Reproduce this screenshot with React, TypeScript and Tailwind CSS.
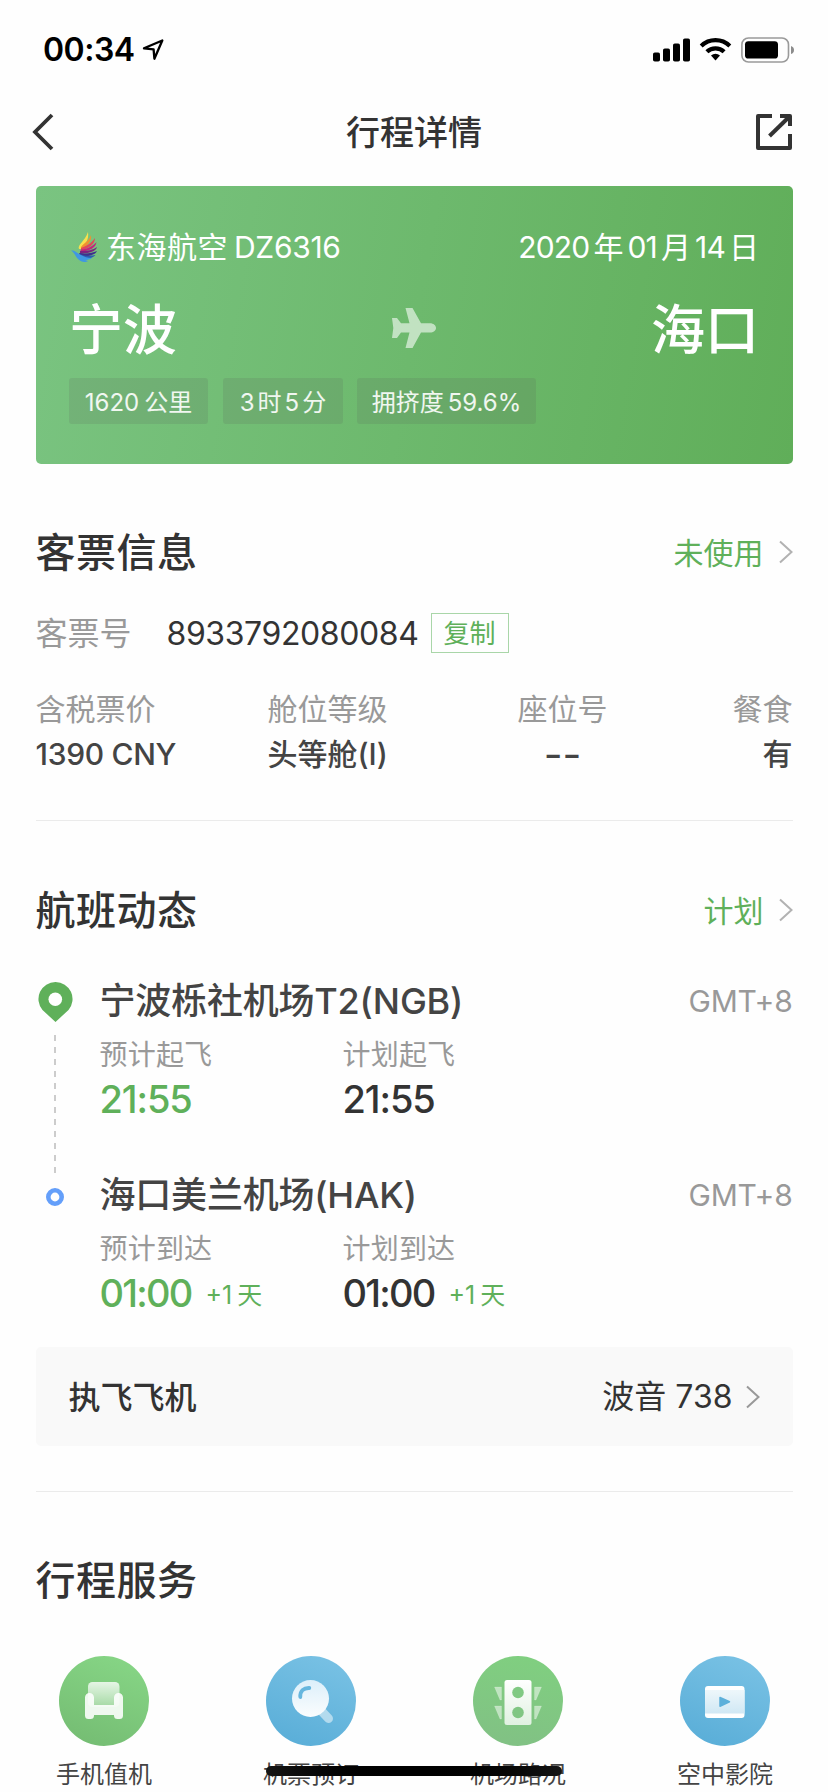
import React from 'react';

const Chevron: React.FC<{ color?: string }> = ({ color = '#b2b2b2' }) => (
  <svg width="14" height="24" viewBox="0 0 14 24" fill="none" className="shrink-0">
    <path d="M1 1.5 L12.5 12 L1 22.5" stroke={color} strokeWidth="2" />
  </svg>
);

const StatusBar: React.FC = () => (
  <div className="h-[99px] flex items-center justify-between pl-[43px] pr-[33px] text-black">
    <div className="flex items-center">
      <span className="w-[99px] text-[32px] leading-10 font-semibold tracking-[-0.5px]">00:34</span>
      <svg width="23" height="22" viewBox="0 0 23 22" fill="none">
        <path d="M2 9.3 L20.3 1.5 L12.4 19.7 L11.6 10.3 Z" stroke="#000" strokeWidth="2.3" strokeLinejoin="round" />
      </svg>
    </div>
    <div className="flex items-center">
      <svg width="38" height="24" viewBox="0 0 38 24">
        <rect x="0" y="14.5" width="7" height="9" rx="1.8" />
        <rect x="10" y="10.5" width="7" height="13" rx="1.8" />
        <rect x="20" y="5.5" width="7" height="18" rx="1.8" />
        <rect x="30" y="0.5" width="7" height="23" rx="1.8" />
      </svg>
      <svg width="33" height="25" viewBox="0 0 33 25" className="ml-[8px]" fill="none" stroke="#000" strokeWidth="4.2">
        <path d="M2.2 8.9 A20.5 20.5 0 0 1 30.8 8.9" />
        <path d="M7.9 14.8 A12.3 12.3 0 0 1 25.1 14.8" />
        <path d="M12 18.4 A7 7 0 0 1 21 18.4 L16.5 23.6 Z" fill="#000" stroke="none" />
      </svg>
      <svg width="54" height="26" viewBox="0 0 54 26" className="ml-[9px]">
        <rect x="0.9" y="1" width="46.6" height="24" rx="6.5" fill="none" stroke="#9a9a9a" strokeWidth="1.6" />
        <rect x="4" y="4.2" width="33" height="17.4" rx="3.4" />
        <path d="M50 9 Q53 10 53 13 Q53 16 50 17 Z" fill="#8c8c8c" />
      </svg>
    </div>
  </div>
);

const NavBar: React.FC = () => (
  <div className="h-[66px] flex items-center justify-between pl-[31px] pr-[36px]">
    <svg width="37" height="38" viewBox="0 0 37 38" fill="none">
      <path d="M21 2 L4 19 L21 36" stroke="#333" strokeWidth="3.8" />
    </svg>
    <h1 className="pt-[2px] pl-[4px] text-[34px] leading-[44px] font-medium text-[#333]">行程详情</h1>
    <svg width="36" height="36" viewBox="0 0 36 36" fill="none" stroke="#333" strokeWidth="4">
      <path d="M16 2 H2 V34 H34 V20" strokeLinejoin="round" />
      <path d="M24 2 H34 V12" strokeLinejoin="round" />
      <path d="M13.5 22 L33 3" />
    </svg>
  </div>
);

const DonghaiLogo: React.FC = () => (
  <svg width="27" height="31" viewBox="0 0 27 31">
    <path d="M17 0 C18 7 15 12 10 17 L8 17 C6 13 14 9 17 0 Z" fill="#f8e04c" />
    <path d="M20 3 C21 9 17 13 10 18 L10 15 C13 11 18 9 20 3 Z" fill="#f0912f" />
    <path d="M24 6 C24 12 18 16 10 19 L10 16 C15 14 20 12 24 6 Z" fill="#e0475a" />
    <path d="M25.5 10 C25 16 18 19 9 20 L10 17.5 C17 17 22 14 25.5 10 Z" fill="#c2247c" />
    <path d="M26 15 C25 20 17 21 9 22 L9 19 C17 19 22 18 26 15 Z" fill="#7c2380" />
    <path d="M26 19 C24 23.500 17 24 10 25 L8 21 C16 22 21 21 26 19 Z" fill="#40308c" />
    <path d="M24.500 23 C22 26 18 26.500 12 27 L8 22 C15 24.500 20 24 24.500 23 Z" fill="#2c5db0" />
    <path d="M0 18.500 C4 18 6 21 9 22.500 C13 25 17 26 21 26 C19 27.500 16 28 14 28 L17 29 C15 30.500 10 30.500 7 27 C4 24 4 21 0 18.500 Z" fill="#3f97e4" />
  </svg>
);

const FlightCard: React.FC = () => (
  <div className="h-[278px] mt-[21px] rounded-[5px] bg-linear-[100deg] from-[#7ac481] to-[#60ae59] px-[33.5px] pt-[39px] text-white">
    <div className="flex items-center justify-between h-[44px]">
      <div className="flex items-center text-[30px] leading-[44px]">
        <span className="ml-[2px]">
          <DonghaiLogo />
        </span>
        <span className="ml-[8px] tracking-[0.5px]">东海航空</span>
        <span className="ml-[6px] tracking-[-0.3px]">DZ6316</span>
      </div>
      <div className="flex items-center gap-[4px] text-[30px] leading-[44px]">
        <span className="tracking-[-0.8px]">2020</span>
        <span>年</span>
        <span className="tracking-[-0.8px]">01</span>
        <span>月</span>
        <span className="tracking-[-0.8px]">14</span>
        <span>日</span>
      </div>
    </div>
    <div className="flex items-center justify-between mt-[21px] h-[76px] text-[54px] leading-[76px] font-medium">
      <span className="pt-[5px]">宁波</span>
      <svg width="44" height="40" viewBox="0 0 44 40">
        <path
          d="M0 10 H5 L9 15.300 H17.500 L13.500 0 H20.500 L29 15.300 H38 C41.500 15.300 44 17.500 44 20 C44 22.500 41.500 24.500 38 24.500 H29 L20.500 40 H13.500 L17.500 24.500 H9 L5 30 H0 L1.300 20 Z"
          fill="#fff"
          fillOpacity="0.58"
        />
      </svg>
      <span className="pt-[5px]">海口</span>
    </div>
    <div className="flex mt-[12px] text-[24px] leading-[49px] text-white/90">
      <div className="w-[139px] h-[46px] rounded-[3px] bg-[#555]/15 flex justify-center gap-[5px]">
        <span>1620</span>
        <span>公里</span>
      </div>
      <div className="w-[120px] h-[46px] ml-[15px] rounded-[3px] bg-[#555]/15 flex justify-center gap-[3px]">
        <span>3</span>
        <span>时</span>
        <span>5</span>
        <span>分</span>
      </div>
      <div className="w-[179px] h-[46px] ml-[14px] rounded-[3px] bg-[#555]/15 flex justify-center gap-[4px]">
        <span>拥挤度</span>
        <span>59.6%</span>
      </div>
    </div>
  </div>
);

const SectionHeader: React.FC<{ title: string; status?: string }> = ({ title, status }) => (
  <div className="flex items-center justify-between h-[56px]">
    <h2 className="pt-[2px] text-[40px] leading-[56px] font-medium text-[#333] tracking-[0.5px]">{title}</h2>
    {status && (
      <div className="flex items-center gap-[15px] text-[30px] leading-[56px] text-[#5fb05a]">
        <span className="pt-px">{status}</span>
        <Chevron />
      </div>
    )}
  </div>
);

const TicketInfo: React.FC = () => (
  <section className="mt-[60px] border-b border-[#ebebeb] h-[297px]">
    <SectionHeader title="客票信息" status="未使用" />
    <div className="flex items-center mt-[33px] h-[40px]">
      <span className="w-[131px] pt-[2px] text-[32px] leading-10 text-[#999]">客票号</span>
      <span className="w-[264px] pt-[1px] text-[32px] leading-10 text-[#333] tracking-[-0.4px]">8933792080084</span>
      <button className="w-[78px] h-[40px] border border-[#a9d6a8] text-[26px] leading-[40px] text-[#5fb05a]">复制</button>
    </div>
    <div className="flex mt-[34px] text-[30px] leading-[45px]">
      <div className="w-[232px]">
        <div className="text-[#999]">含税票价</div>
        <div className="font-medium text-[#444] tracking-[-0.3px]">1390 CNY</div>
      </div>
      <div className="w-[250px]">
        <div className="text-[#999]">舱位等级</div>
        <div className="font-medium text-[#444]">头等舱(I)</div>
      </div>
      <div className="w-[90px] text-center">
        <div className="text-[#999]">座位号</div>
        <div className="text-[#444] text-[41px]">--</div>
      </div>
      <div className="flex-1 text-right">
        <div className="text-[#999]">餐食</div>
        <div className="font-medium text-[#444]">有</div>
      </div>
    </div>
  </section>
);

interface StopProps {
  marker: React.ReactNode;
  airport: string;
  labels: [string, string];
  time: React.ReactNode;
  nextDay?: boolean;
}

const NextDay = () => (
  <span className="flex gap-[5px] pt-[2px] ml-[15px] text-[25px] font-normal text-[#5fb05a]">
    <span>+1</span>
    <span>天</span>
  </span>
);

const Stop: React.FC<StopProps> = ({ marker, airport, labels, time, nextDay }) => (
  <div className="flex h-[194px]">
    <div className="w-[64px] flex flex-col shrink-0">{marker}</div>
    <div className="flex-1">
      <div className="flex justify-between leading-[58px]">
        <span className="text-[36px] font-medium text-[#444] tracking-[-0.2px]">{airport}</span>
        <span className="text-[30px] text-[#999] tracking-[-0.2px]">GMT+8</span>
      </div>
      <div className="flex text-[28px] leading-[51px] text-[#999] tracking-[0.2px]">
        <span className="w-[243px]">{labels[0]}</span>
        <span>{labels[1]}</span>
      </div>
      <div className="flex text-[38px] leading-[37px] font-medium">
        <div className="w-[243px] flex text-[#5fb05a]">
          <span className="w-[91px]">{time}</span>
          {nextDay && <NextDay />}
        </div>
        <div className="flex text-[#333]">
          <span className="w-[91px]">{time}</span>
          {nextDay && <NextDay />}
        </div>
      </div>
    </div>
  </div>
);

const DepartureMarker = () => (
  <>
    <svg width="35" height="40" viewBox="0 0 35 40" className="shrink-0 ml-[2px] mt-[10px]">
      <path d="M17.500 0 A17 17 0 0 1 30.500 28 L17.500 40 L4.500 28 A17 17 0 0 1 17.500 0 Z" fill="#5fb05a" />
      <circle cx="17.300" cy="17.300" r="6.800" fill="#fff" />
    </svg>
    <svg width="2" height="138" viewBox="0 0 2 138" className="shrink-0 ml-[18.5px] mt-[13px]">
      <path d="M1 0 V138" stroke="#ccc" strokeWidth="2" strokeDasharray="6 6" />
    </svg>
  </>
);

const ArrivalMarker = () => (
  <svg width="18" height="18" viewBox="0 0 18 18" className="shrink-0 ml-[10.5px] mt-[22px]">
    <circle cx="9" cy="9" r="6.700" fill="none" stroke="#649ffa" strokeWidth="4.600" />
  </svg>
);

const FlightStatus: React.FC = () => (
  <section className="pt-[61px] border-b border-[#ebebeb] h-[671px]">
    <SectionHeader title="航班动态" status="计划" />
    <div className="mt-[34px]">
      <Stop
        marker={<DepartureMarker />}
        airport="宁波栎社机场T2(NGB)"
        labels={['预计起飞', '计划起飞']}
        time={<span className="tracking-[-1.1px]">21:55</span>}
      />
      <Stop
        marker={<ArrivalMarker />}
        airport="海口美兰机场(HAK)"
        labels={['预计到达', '计划到达']}
        time={<span className="tracking-[-1.8px]">01:00</span>}
        nextDay
      />
    </div>
    <div className="-mt-[13px] h-[99px] rounded-[5px] bg-[#f9f9f9] flex items-center justify-between px-[33px] text-[32px] leading-[44px] text-[#333]">
      <span className="pt-[2px] font-medium">执飞飞机</span>
      <div className="flex items-center gap-[13px]">
        <span className="pt-[1px]">波音 738</span>
        <Chevron color="#999" />
      </div>
    </div>
  </section>
);

const SeatIcon = () => (
  <svg width="90" height="90" viewBox="0 0 90 90">
    <defs>
      <linearGradient id="seatBg" x1="0.7" y1="0" x2="0.3" y2="1">
        <stop stopColor="#86d585" />
        <stop offset="1" stopColor="#75bd73" />
      </linearGradient>
      <linearGradient id="seatBack" x1="0" y1="0" x2="0" y2="1">
        <stop stopColor="#fff" stopOpacity="0.8" />
        <stop offset="1" stopColor="#fff" stopOpacity="0.3" />
      </linearGradient>
    </defs>
    <circle cx="45" cy="45" r="45" fill="url(#seatBg)" />
    <rect x="29" y="26" width="31.500" height="25" rx="4.500" fill="url(#seatBack)" />
    <path
      d="M26 41.500 a4.500 4.500 0 0 1 9 0 V49 H55 V41.500 a4.500 4.500 0 0 1 9 0 V59.500 a3.500 3.500 0 0 1 -3.500 3.500 H58.500 a3.500 3.500 0 0 1 -3.500 -3.500 V59 H35 V59.500 a3.500 3.500 0 0 1 -3.500 3.500 H29.500 a3.500 3.500 0 0 1 -3.500 -3.500 Z"
      fill="#fff"
      fillOpacity="0.88"
    />
  </svg>
);

const SearchIcon = () => (
  <svg width="90" height="90" viewBox="0 0 90 90">
    <defs>
      <linearGradient id="searchBg" x1="0.7" y1="0" x2="0.3" y2="1">
        <stop stopColor="#78c1e4" />
        <stop offset="1" stopColor="#5aaed8" />
      </linearGradient>
      <linearGradient id="searchLens" x1="0" y1="0" x2="0" y2="1">
        <stop stopColor="#dceffa" />
        <stop offset="1" stopColor="#fbfdfe" />
      </linearGradient>
    </defs>
    <circle cx="45" cy="45" r="45" fill="url(#searchBg)" />
    <path d="M55 54.500 L62.500 62.500" stroke="#fff" strokeOpacity="0.5" strokeWidth="9" strokeLinecap="round" />
    <circle cx="44.500" cy="42.500" r="18.500" fill="url(#searchLens)" />
    <path d="M34.300 41 C34 35 37.500 31.800 43.300 32" stroke="#66b6de" strokeWidth="3.800" strokeLinecap="round" fill="none" />
  </svg>
);

const TrafficIcon = () => (
  <svg width="90" height="90" viewBox="0 0 90 90">
    <defs>
      <linearGradient id="trafficBg" x1="0.6" y1="0" x2="0.4" y2="1">
        <stop stopColor="#80cf80" />
        <stop offset="1" stopColor="#81c184" />
      </linearGradient>
      <linearGradient id="trafficBody" x1="0" y1="0" x2="0" y2="1">
        <stop stopColor="#fff" />
        <stop offset="1" stopColor="#e0f1e1" />
      </linearGradient>
    </defs>
    <circle cx="45" cy="45" r="45" fill="url(#trafficBg)" />
    <path
      d="M21.500 31 H28.500 V44 H27 Z M68.500 31 H61.500 V44 H63 Z M21.500 50 H28.500 V63 H27 Z M68.500 50 H61.500 V63 H63 Z"
      fill="#fff"
      fillOpacity="0.5"
      stroke="#fff"
      strokeOpacity="0.15"
      strokeLinejoin="round"
    />
    <rect x="31.500" y="24" width="27" height="45" rx="2.500" fill="url(#trafficBody)" />
    <circle cx="45" cy="36.500" r="5.800" fill="#80c983" />
    <circle cx="45" cy="56.500" r="5.800" fill="#80c683" />
  </svg>
);

const CinemaIcon = () => (
  <svg width="90" height="90" viewBox="0 0 90 90">
    <defs>
      <linearGradient id="cinemaBg" x1="0.7" y1="0" x2="0.3" y2="1">
        <stop stopColor="#78c1e4" />
        <stop offset="1" stopColor="#5aaed8" />
      </linearGradient>
      <linearGradient id="cinemaScreen" x1="0" y1="0" x2="0" y2="1">
        <stop stopColor="#eef7fb" />
        <stop offset="1" stopColor="#d0e8f4" />
      </linearGradient>
    </defs>
    <circle cx="45" cy="45" r="45" fill="url(#cinemaBg)" />
    <rect x="25" y="30" width="39.500" height="32" rx="3" fill="#fff" />
    <rect x="25" y="34" width="39.500" height="23.500" fill="url(#cinemaScreen)" />
    <path d="M40 41.500 L49.500 45.800 L40 50.200 Z" fill="#5db0da" stroke="#5db0da" strokeWidth="1.500" strokeLinejoin="round" />
  </svg>
);

const services = [
  { label: '手机值机', icon: <SeatIcon /> },
  { label: '机票预订', icon: <SearchIcon /> },
  { label: '机场路况', icon: <TrafficIcon /> },
  { label: '空中影院', icon: <CinemaIcon /> },
];

const Services: React.FC = () => (
  <section className="pt-[60px]">
    <SectionHeader title="行程服务" />
    <div className="flex justify-between mt-[48px] pl-[20.5px] pr-[19.5px]">
      {services.map((service) => (
        <div key={service.label} className="w-[96px] flex flex-col items-center">
          {service.icon}
          <span className="mt-[12px] text-[24px] leading-[34px] text-[#444] whitespace-nowrap">{service.label}</span>
        </div>
      ))}
    </div>
  </section>
);

export default function App() {
  return (
    <div className="relative w-[828px] h-[1792px] overflow-hidden bg-[#fefefe] font-['Inter','Noto_Sans_CJK_SC',sans-serif]">
      <StatusBar />
      <NavBar />
      <main className="px-[35.5px]">
        <FlightCard />
        <TicketInfo />
        <FlightStatus />
        <Services />
      </main>
      {/* Home indicator */}
      <div className="absolute left-[266px] top-[1766px] w-[296px] h-[10px] rounded-full bg-linear-to-r from-[#151515] via-black to-[#151515]" />
    </div>
  );
}
